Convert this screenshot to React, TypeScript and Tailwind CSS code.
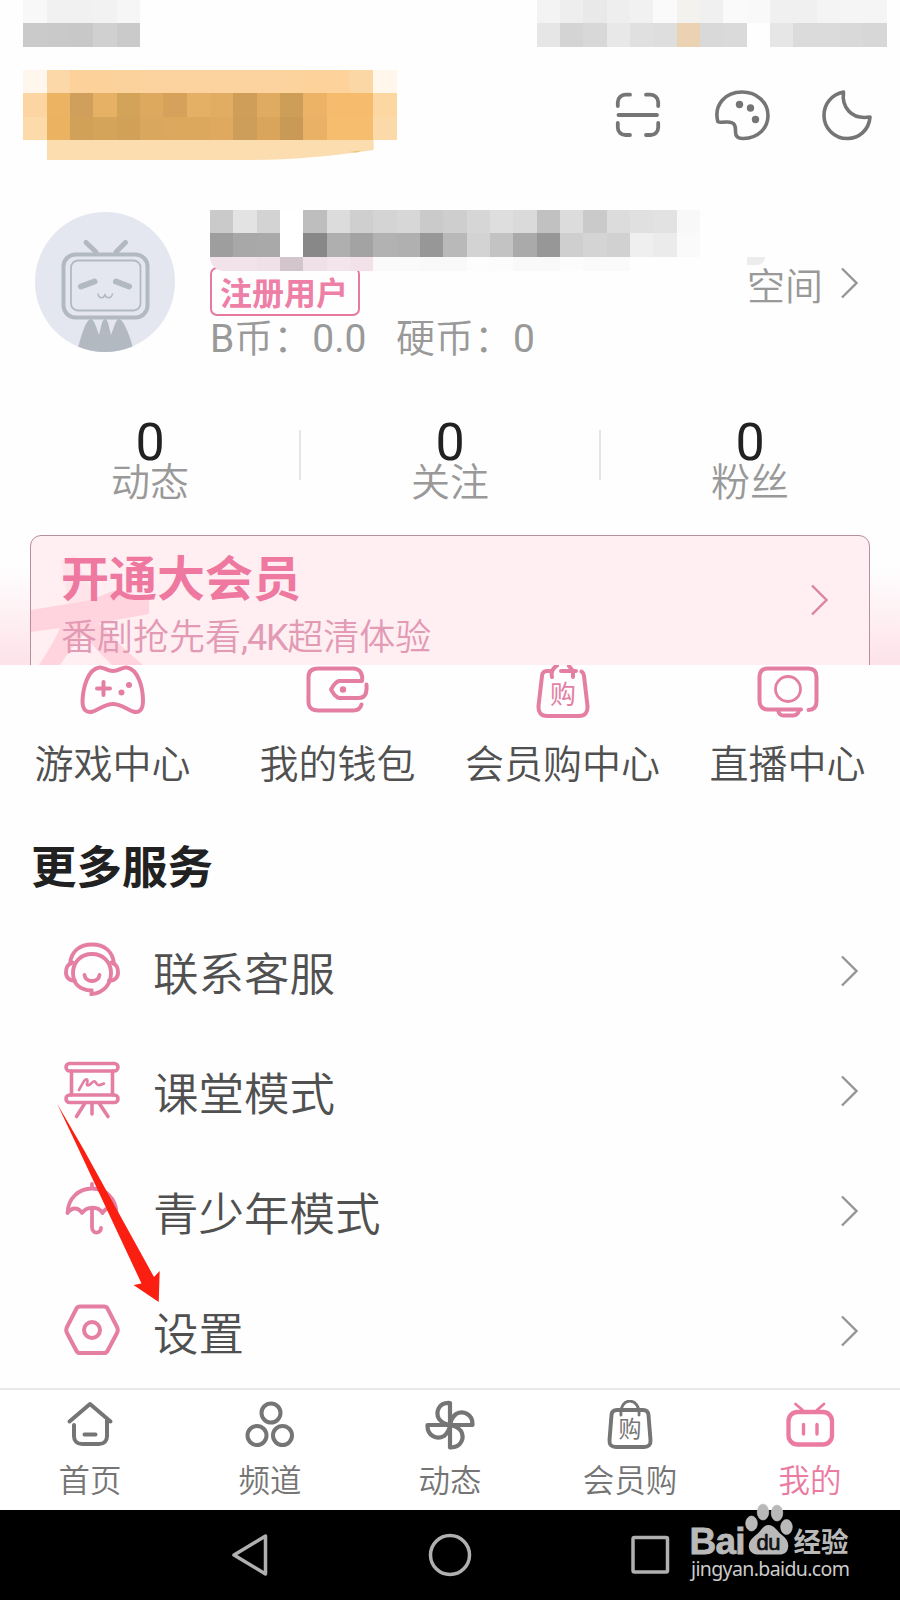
import type { ReactNode } from 'react';

const PINK = '#e47fa3';
const GRAY = '#757575';

const statusLeft = [
  ['bg-[#f8f8f8]', 'bg-[#f1f1f1]', 'bg-[#f1f1f1]', 'bg-[#f2f2f2]', 'bg-[#f6f6f6]'],
  ['bg-[#cacaca]', 'bg-[#c9c9c9]', 'bg-[#c8c8c8]', 'bg-[#d0d0d0]', 'bg-[#cacaca]'],
];

const statusRight = [
  ['bg-[#f3f3f3]', 'bg-[#eeeeee]', 'bg-[#e9e9e9]', 'bg-[#eeeeee]', 'bg-[#f1f1f1]', 'bg-[#fafafa]', 'bg-[#f4f2ee]', 'bg-[#f0f0f0]', 'bg-[#fafafa]', 'bg-[#f9f9f9]', 'bg-[#f0f0f0]', 'bg-[#f0f0f0]', 'bg-[#f4f4f4]', 'bg-[#f5f5f5]', 'bg-[#f5f5f5]'],
  ['bg-[#e6e6e6]', 'bg-[#d4d4d4]', 'bg-[#d8d8d8]', 'bg-[#e8e8e8]', 'bg-[#e0e0e0]', 'bg-[#dedede]', 'bg-[#ead2b3]', 'bg-[#d9d9d9]', 'bg-[#dadada]', 'bg-[#fefefe]', 'bg-[#e6e6e6]', 'bg-[#dbdbdb]', 'bg-[#dbdbdb]', 'bg-[#d9d9d9]', 'bg-[#d7d7d7]'],
];

const searchBar = [
  ['bg-[#fff7ee]', 'bg-[#fcd8a8]', 'bg-[#fdd29a]', 'bg-[#fdd29a]', 'bg-[#fcd29c]', 'bg-[#fcd39e]', 'bg-[#fcd39e]', 'bg-[#fcd39e]', 'bg-[#fcd39e]', 'bg-[#fcd39e]', 'bg-[#fcd39e]', 'bg-[#fcd39d]', 'bg-[#fdd39b]', 'bg-[#fdd39b]', 'bg-[#fbd7a6]', 'bg-[#fff7ec]'],
  ['bg-[#fcd5a2]', 'bg-[#ecb363]', 'bg-[#cf9f5b]', 'bg-[#e6b164]', 'bg-[#d3a35a]', 'bg-[#dda95f]', 'bg-[#d5a15b]', 'bg-[#e4b065]', 'bg-[#e0ad62]', 'bg-[#cf9f5a]', 'bg-[#dfab60]', 'bg-[#cd9e58]', 'bg-[#ecb367]', 'bg-[#f6bb6c]', 'bg-[#f6bb6c]', 'bg-[#fcd7a1]'],
  ['bg-[#fcdaa9]', 'bg-[#ebb262]', 'bg-[#d2a159]', 'bg-[#d5a45b]', 'bg-[#d2a159]', 'bg-[#daa75e]', 'bg-[#dba85e]', 'bg-[#dca85e]', 'bg-[#dfaa60]', 'bg-[#cd9e59]', 'bg-[#daa45b]', 'bg-[#c99a55]', 'bg-[#e9b166]', 'bg-[#f6bd6f]', 'bg-[#f6bd6e]', 'bg-[#fbd9a8]'],
];

const userName = [
  ['bg-[#cacaca]', 'bg-[#e3e3e3]', 'bg-[#d3d3d3]', 'bg-white', 'bg-[#bebebe]', 'bg-[#dcdcdc]', 'bg-[#cfcfcf]', 'bg-[#d4d4d4]', 'bg-[#d7d7d7]', 'bg-[#cacaca]', 'bg-[#cecece]', 'bg-[#d6d6d6]', 'bg-[#dedede]', 'bg-[#dadada]', 'bg-[#c1c1c1]', 'bg-[#dcdcdc]', 'bg-[#cacaca]', 'bg-[#dcdcdc]', 'bg-[#e0e0e0]', 'bg-[#e2e2e2]', 'bg-[#f8f8f8]'],
  ['bg-[#9e9e9e]', 'bg-[#a8a8a8]', 'bg-[#a9a9a9]', 'bg-white', 'bg-[#888888]', 'bg-[#afafaf]', 'bg-[#a3a3a3]', 'bg-[#b2b2b2]', 'bg-[#b0b0b0]', 'bg-[#979797]', 'bg-[#b9b9b9]', 'bg-[#d3d3d3]', 'bg-[#c3c3c3]', 'bg-[#aaaaaa]', 'bg-[#979797]', 'bg-[#cfcfcf]', 'bg-[#d4d4d4]', 'bg-[#d1d1d1]', 'bg-[#efefef]', 'bg-[#ebebeb]', 'bg-[#fafafa]'],
];

const nameShadow = [
  ['bg-[#f2e2e9] rounded-bl-full', 'bg-[#f2e2e9]', 'bg-[#f0e0e8]', 'bg-[#d2c5cc]', 'bg-[#f0e0e8]', 'bg-[#f4e4eb]', 'bg-[#f3e1e9]', 'bg-[#fafafa]', 'bg-[#fafafa]', 'bg-[#f9f9f9]', 'bg-[#f9f9f9]', 'bg-[#fdfdfd]', 'bg-[#fcfcfc]', 'bg-[#f9f9f9]', 'bg-[#f9f9f9]', 'bg-[#fcfcfc]', 'bg-[#fafafa]', 'bg-[#fafafa]'],
];

function Mosaic({ rows, rowClass = 'h-[23.33px]' }: { rows: string[][]; rowClass?: string }) {
  return (
    <div className="flex flex-col">
      {rows.map((row, i) => (
        <div key={i} className={`flex ${rowClass}`}>
          {row.map((cell, j) => (
            <div key={j} className={`w-[23.33px] ${cell}`} />
          ))}
        </div>
      ))}
    </div>
  );
}

function Chevron({ color = '#969696' }: { color?: string }) {
  return (
    <svg width="18" height="32" viewBox="0 0 18 32" fill="none" stroke={color} strokeWidth="2.4">
      <path d="M2 1.5 L16.500 16 L2 30.5" />
    </svg>
  );
}

function ScanIcon() {
  return (
    <svg width="46" height="46" viewBox="0 0 46 46" fill="none" stroke={GRAY} strokeWidth="3.800" strokeLinecap="round">
      <path d="M2.8 14V10a7.500 7.500 0 0 1 7.500-7.300H15M31 2.700h4.700A7.500 7.500 0 0 1 43.200 10v4M43.200 31v4.500a7.500 7.500 0 0 1-7.500 7.500H31M15 43h-4.700a7.500 7.500 0 0 1-7.500-7.500V31M3.500 23h38.500" />
    </svg>
  );
}

function PaletteIcon() {
  return (
    <svg width="56" height="52" viewBox="0 0 56 52" fill="none">
      <path
        d="M3.800 32.500C-.500 15 12 3 28 3c15 0 26 10.500 26 23.500C54 39 44.500 49 29.500 49.500c-6 .200-8-2.500-8-6.500.200-6-.500-10-8-10-5 .200-8.800.500-9.700-.500z"
        stroke={GRAY}
        strokeWidth="3.600"
      />
      <circle cx="25.500" cy="15.500" r="3.700" fill={GRAY} />
      <circle cx="36.500" cy="19" r="3.700" fill={GRAY} />
      <circle cx="41.500" cy="30.500" r="3.700" fill={GRAY} />
    </svg>
  );
}

function MoonIcon() {
  return (
    <svg width="52" height="52" viewBox="0 0 52 52" fill="none" stroke={GRAY} strokeWidth="3.600" strokeLinejoin="round">
      <path d="M22.500 3C20.500 18 30 31 49 28C48 41 38 49.500 26.500 49.500C13 49.500 3 39 3 26.500C3 15 10.500 5.500 22.500 3z" />
    </svg>
  );
}

function Avatar() {
  return (
    <svg width="140" height="140" viewBox="0 0 140 140">
      <defs>
        <clipPath id="avatar">
          <circle cx="70" cy="70" r="70" />
        </clipPath>
      </defs>
      <circle cx="70" cy="70" r="70" fill="#e5e7f0" />
      <g clipPath="url(#avatar)" fill="none" stroke="#b3b9c1" strokeLinecap="round">
        <path d="M40 150C45 125 51 107 56 107C59 107 62 117 64 123C66 115 67 107 70 107C73 107 74 115 76 123C79 115 81 107 84 107C89 107 98 130 101 150z" fill="#b3b9c1" stroke="none" />
        <path d="M51 30.500L61 40M90.500 30.500L81 40" strokeWidth="5" />
        <rect x="28.500" y="42.500" width="84" height="63" rx="12" strokeWidth="4" fill="#e5e7f0" />
        <rect x="36" y="48.500" width="69.500" height="50" rx="7" strokeWidth="1.800" />
        <path d="M46 74.500L59.500 69.500M81 69.500L94 74.500" strokeWidth="6" />
        <path d="M63 82C64 87 69 87 70 82C71 87 76 87 77.500 82" strokeWidth="1.500" />
      </g>
    </svg>
  );
}

function GamepadIcon() {
  return (
    <svg width="66" height="50" viewBox="0 0 66 50" fill="none" stroke={PINK} strokeWidth="4" strokeLinecap="round" strokeLinejoin="round">
      <path d="M19 2.500C23 1.500 27 6 33 6C39 6 43 1.500 47 2.500C58 4.500 63 22 63 36C63 45 59 48.500 53 46.500C46 43.500 40 39 33 39C26 39 20 43.500 13 46.500C6 48.500 2.500 44.500 2.500 36C3 22 8 4.500 19 2.500z" />
      <path d="M23.500 17v13M17 23.500h13" />
      <circle cx="49" cy="20" r="3" fill={PINK} stroke="none" />
      <circle cx="41.500" cy="27.500" r="3" fill={PINK} stroke="none" />
    </svg>
  );
}

function WalletIcon() {
  return (
    <svg width="66" height="50" viewBox="0 0 66 50" fill="none" stroke={PINK} strokeWidth="4" strokeLinecap="round" strokeLinejoin="round">
      <path d="M56.500 39.500C55.500 43.500 52.500 45.500 48 45.500H13C7 45.500 3.500 42.500 3.500 37V12C3.500 6 7 3.500 13 3.500H48C55 3.500 58 9 57 16H34C30 17 28 21 26 24.500C28 28 30 32 34 33H54C60 33 62 29 61.500 19.500" />
      <circle cx="38" cy="24.500" r="3.200" fill={PINK} stroke="none" />
    </svg>
  );
}

function MallIcon() {
  return (
    <svg width="56" height="54" viewBox="0 0 56 54" fill="none" stroke={PINK} strokeWidth="4" strokeLinecap="round" strokeLinejoin="round">
      <path d="M16.500 6H12Q7.500 6 7 11L3.500 41Q3 51 12 51H44Q53 51 52.500 41L49 11Q48.500 7.500 46.500 6.500M26 6H41M17 12C15.500 6 18 3 22 .500M38 12V6L34 1" />
      <text x="28" y="39" textAnchor="middle" fontSize="26" fontWeight="400" fill={PINK} stroke="none">购</text>
    </svg>
  );
}

function LiveIcon() {
  return (
    <svg width="64" height="54" viewBox="0 0 64 54" fill="none" stroke={PINK} strokeWidth="4" strokeLinecap="round">
      <path d="M52.500 45C58 45 60.500 42 60.500 36.500V12C60.500 6.500 58 3.500 52.500 3.500H12C6.500 3.500 3.500 6.500 3.500 12V35.500C3.500 41 6.500 44.500 12 44.500H45" />
      <path d="M22 45C23 49 24 50.500 27.500 50.500H37C40.500 50.500 42 49 43 45.500" />
      <circle cx="32" cy="24" r="12.500" strokeWidth="2.800" />
    </svg>
  );
}

function SupportIcon() {
  return (
    <svg className="-mt-[5px]" width="58" height="56" viewBox="0 0 58 56" fill="none" stroke={PINK} strokeWidth="3.900" strokeLinecap="round">
      <path d="M7 23C8 10 17 3.500 29 3.500C41 3.500 50 10 51 23" />
      <path d="M9.500 21.500C3.500 24 3 27.500 3 32C3 36.500 7 40.500 12 39.500M48.500 21.500C54.500 24 55 27.500 55 32C55 36.500 51 40.500 46 39.500" />
      <path d="M28.500 53V49.500C16 49 10 42 10 32C10 21 18 13 29 13C40 13 48 21 48 32C48 43 41 52 28.500 53z" />
      <path d="M21.500 34C22.500 42 35.500 42 36.500 34" />
    </svg>
  );
}

function ClassroomIcon() {
  return (
    <svg className="-mt-[2px]" width="56" height="58" viewBox="0 0 56 58" fill="none" stroke={PINK} strokeWidth="3.600" strokeLinecap="round" strokeLinejoin="round">
      <rect x="2" y="2.500" width="52" height="7.500" rx="3.700" />
      <rect x="2" y="34" width="52" height="7.500" rx="3.700" />
      <path d="M7.500 10v24M48.500 10v24M21 42L12.500 55.500M28 42V53M35 42L44 55.500" />
      <path d="M15 29C19 22 21 17 23 18.500C25 20 21 24.500 24 24.500C27 24 29 19 31 20.500C33 23 33 26 40 22.500" strokeWidth="2.600" />
    </svg>
  );
}

function UmbrellaIcon() {
  return (
    <svg className="-mt-[4px]" width="56" height="54" viewBox="0 0 56 54" fill="none" stroke={PINK} strokeWidth="3.800" strokeLinecap="round" strokeLinejoin="round">
      <path d="M28 2V6M3.500 31C4 16 15 6.500 28 6.500C41 6.500 52 16 52.500 31C48 25 42 25 38.500 31C34.500 24 23 24 18 31C14 25 8 25 3.500 31z" />
      <path d="M28 26V45C28 52.500 37 52 37 46" />
    </svg>
  );
}

function SettingsIcon() {
  return (
    <svg className="-mt-[2px]" width="56" height="52" viewBox="0 0 56 52" fill="none" stroke={PINK} strokeLinejoin="round">
      <path d="M16 2.500H40Q42.500 2.500 43.500 4.500L53 23Q54.500 26 53 29L43.500 47Q42.500 49 40 49H16Q13.500 49 12.500 47L3 29Q1.500 26 3 23L12.500 4.500Q13.500 2.500 16 2.500z" strokeWidth="4" />
      <circle cx="28" cy="26" r="8" strokeWidth="4" />
    </svg>
  );
}

function HomeIcon() {
  return (
    <svg width="48" height="48" viewBox="0 0 48 48" fill="none" stroke={GRAY} strokeWidth="4" strokeLinecap="round" strokeLinejoin="round">
      <path d="M3.500 21.500L24 4L44.500 21.500M41 20V36C41 41 38 44 33 44H16C11 44 8 41 8 36V25M18.500 34.500H29.500" />
    </svg>
  );
}

function ChannelIcon() {
  return (
    <svg width="50" height="48" viewBox="0 0 50 48" fill="none" stroke={GRAY} strokeWidth="4">
      <circle cx="26" cy="13" r="9.500" />
      <circle cx="12" cy="35.500" r="9.500" />
      <circle cx="37.500" cy="35.500" r="9.500" />
    </svg>
  );
}

function FanIcon() {
  return (
    <svg width="50" height="50" viewBox="0 0 50 50" fill="none" stroke={GRAY} strokeWidth="4.200" strokeLinejoin="round">
      <path d="M25 25V3C14 2 10 12 14 19Q18 24 25 25z" />
      <path d="M25 25H47.500C48 14 38 10 31 14Q26 18 25 25z" />
      <path d="M25 25V47.500C36 48 40 38 36 31Q32 26 25 25z" />
      <path d="M25 25H2.500C2 36 12 40 19 36Q24 32 25 25z" />
    </svg>
  );
}

function ShopIcon() {
  return (
    <svg width="48" height="50" viewBox="0 0 48 50" fill="none" stroke={GRAY} strokeWidth="3.900" strokeLinecap="round">
      <path d="M11 10H37Q42 10 42.500 15L44.500 40Q45 47 38 47H10Q3 47 3.500 40L5.500 15Q6 10 11 10z" />
      <path d="M15 15C13 -3.500 34.500 -3.500 33 15" strokeWidth="2.800" />
      <text x="24" y="37" textAnchor="middle" fontSize="23" fontWeight="400" fill={GRAY} stroke="none">购</text>
    </svg>
  );
}

function MineIcon() {
  return (
    <svg width="50" height="48" viewBox="0 0 50 48" fill="none" stroke="#ec7ba2" strokeLinecap="round">
      <rect x="3.500" y="12" width="43.500" height="32.500" rx="9" strokeWidth="4.300" />
      <path d="M10.500 4L17.500 10M39 4L32 10" strokeWidth="2.800" />
      <path d="M18.500 24.500V34M32 24.500V34" strokeWidth="3.400" />
    </svg>
  );
}

const stats = [
  { value: 0, label: '动态' },
  { value: 0, label: '关注' },
  { value: 0, label: '粉丝' },
];

const shortcuts: { icon: ReactNode; label: string }[] = [
  { icon: <GamepadIcon />, label: '游戏中心' },
  { icon: <WalletIcon />, label: '我的钱包' },
  { icon: <MallIcon />, label: '会员购中心' },
  { icon: <LiveIcon />, label: '直播中心' },
];

const services: { icon: ReactNode; label: string }[] = [
  { icon: <SupportIcon />, label: '联系客服' },
  { icon: <ClassroomIcon />, label: '课堂模式' },
  { icon: <UmbrellaIcon />, label: '青少年模式' },
  { icon: <SettingsIcon />, label: '设置' },
];

const tabs: { icon: ReactNode; label: string; active?: boolean }[] = [
  { icon: <HomeIcon />, label: '首页' },
  { icon: <ChannelIcon />, label: '频道' },
  { icon: <FanIcon />, label: '动态' },
  { icon: <ShopIcon />, label: '会员购' },
  { icon: <MineIcon />, label: '我的', active: true },
];

function Watermark() {
  return (
    <svg className="absolute left-[686px] -top-[8px]" width="170" height="90" viewBox="0 0 170 90" fill="#b9b9b9">
      <text x="3.500" y="52" fontFamily="Liberation Sans" fontWeight="700" fontSize="37" textLength="56" stroke="#b9b9b9" strokeWidth=".8">Bai</text>
      <g stroke="#c9c9c9" strokeWidth=".6">
        <ellipse cx="65.500" cy="21.500" rx="5.800" ry="7.500" />
        <ellipse cx="77" cy="10" rx="5.800" ry="8" />
        <ellipse cx="91" cy="11" rx="5.800" ry="8" />
        <ellipse cx="100.500" cy="25" rx="5.800" ry="7.500" />
      </g>
      <path d="M82.500 23C88 23 91 29 96 33C101 37 103 41 102 46C101 52 96 53 91 52.500H74C69 53 64 51 63 46C62 40 66 36 70 33C75 29 77 23 82.500 23z" />
      <text x="70.500" y="47.500" fontFamily="Liberation Sans" fontSize="22" fontWeight="400" fill="#111" stroke="#111" strokeWidth=".7" textLength="24">du</text>
      <text x="107.500" y="49.500" fontSize="27.500" fontWeight="700" textLength="55">经验</text>
      <text x="5" y="73.500" fontFamily="Noto Sans" fontWeight="400" fontSize="19.500" fill="#cccccc" textLength="159">jingyan.baidu.com</text>
    </svg>
  );
}

export default function App() {
  return (
    <div className="relative flex h-[1600px] w-[900px] flex-col overflow-hidden bg-[#fefefe] font-['Noto_Sans_CJK_SC',sans-serif] font-[350]">
      {/* Status bar */}
      <div className="flex h-[70px] justify-between pr-[13.5px] pl-[23.33px]">
        <Mosaic rows={statusLeft} />
        <Mosaic rows={statusRight} />
      </div>

      {/* Top bar */}
      <div className="flex h-[140px] items-start justify-between pr-[27px] pl-[23.33px]">
        <div>
          <Mosaic rows={searchBar} />
          <svg className="ml-[23.33px] block" width="328" height="22" viewBox="0 0 328 22">
            <path d="M0 0H326.700V10C280 17 240 20 200 20H0z" fill="#fbddb0" />
            <path d="M302 12L314 10.500L310 12.500z" fill="#e5c477" />
          </svg>
        </div>
        <div className="flex items-center pt-[19px]">
          <ScanIcon />
          <div className="mr-[51px] ml-[53px]">
            <PaletteIcon />
          </div>
          <MoonIcon />
        </div>
      </div>

      {/* Profile */}
      <div className="flex h-[210px] pl-[35px]">
        <div className="w-[175px] pt-[2px]">
          <Avatar />
        </div>
        <div className="flex w-[490px] flex-col">
          <Mosaic rows={userName} />
          <div className="relative h-[60.500px]">
            <div className="absolute top-[10px] flex h-[49px] w-[150px] items-center justify-center rounded-[7px] border-[2.500px] border-[#e6799f] pr-[2px] text-[32px] leading-none font-bold text-[#ee7fa6]">
              注册用户
            </div>
            <div className="absolute top-0">
              <Mosaic rows={nameShadow} rowClass="h-[14px]" />
            </div>
          </div>
          <div className="flex h-[44px] items-center font-[Roboto,'Noto_Sans_CJK_SC',sans-serif] text-[39px] leading-none whitespace-nowrap text-[#999]">
            <div className="w-[186px]">
              <span className="font-normal">B</span>币：<span className="font-normal">0.0</span>
            </div>
            <div>
              硬币：<span className="font-normal">0</span>
            </div>
          </div>
        </div>
        <div className="relative flex h-[145px] flex-1 items-center pl-[47px] text-[38px] text-[#999]">
          <div className="absolute top-[47px] left-[47px] h-[8px] w-[18px] rounded-br-full bg-[#ececec]" />
          <span className="w-[93px] pt-[3px] leading-none">空间</span>
          <Chevron />
        </div>
      </div>

      {/* Stats */}
      <div className="grid h-[115px] grid-cols-3">
        {stats.map((item, i) => (
          <div key={item.label} className="flex">
            <div className="flex flex-1 flex-col items-center">
              <div className="h-[37px] font-[Roboto] text-[52px] leading-[45px] font-normal text-[#212121]">{item.value}</div>
              <div className="text-[39px] leading-[44px] text-[#999]">{item.label}</div>
            </div>
            {i < 2 && <div className="-mr-[1px] -ml-[1px] mt-[10px] h-[50px] w-[2px] bg-[#e5e5e5]" />}
          </div>
        ))}
      </div>

      {/* VIP card */}
      <div className="h-[130px] overflow-hidden bg-linear-to-b from-[#fefefe] from-25% to-[#fde2e9] px-[30px]">
        <div className="relative flex h-[150px] items-start justify-between overflow-hidden rounded-[11px] border border-[#b58e9f] bg-[#ffeff2]">
          <svg className="absolute top-0 left-0" width="130" height="130" viewBox="0 0 130 130" fill="#ffd4df">
            <path d="M30 24L44 20L64 62L56 70H38z" fill="#ffe5eb" />
            <path d="M0 74L60 64L84 54L118 62V78L68 87Q85 106 112 129H81Q61 110 53 98Q40 112 29 129H8Q22 108 29 92L0 96z" />
          </svg>
          <div className="relative pl-[30px] whitespace-nowrap">
            <div className="pt-[15px] text-[48px] leading-[48px] font-bold text-[#ee789f]">开通大会员</div>
            <div className="mt-[19px] font-[Roboto,'Noto_Sans_CJK_SC',sans-serif] text-[36px] leading-[40px] text-[#e39ab4]">
              番剧抢先看<span className="font-normal tracking-[-1.200px]">,4K</span>超清体验
            </div>
          </div>
          <div className="mt-[48px] mr-[41px]">
            <Chevron color="#db84a2" />
          </div>
        </div>
      </div>

      {/* Shortcuts */}
      <div className="grid h-[160px] grid-cols-4">
        {shortcuts.map((item) => (
          <div key={item.label} className="flex flex-col items-center">
            <div className="h-[74px]">{item.icon}</div>
            <div className="text-[39px] leading-[44px] text-[#505050]">{item.label}</div>
          </div>
        ))}
      </div>

      {/* More services */}
      <h2 className="h-[86px] pt-[16px] pl-[31px] text-[45.500px] leading-[46px] font-bold text-[#212121]">更多服务</h2>
      <div className="h-[477px]">
        {services.map((item) => (
          <div key={item.label} className="flex h-[120px] items-center pr-[42px] pl-[62px]">
            <div className="flex w-[60px] justify-center">{item.icon}</div>
            <span className="ml-[31px] flex-1 pt-[1px] text-[45.500px] leading-none text-[#505050]">{item.label}</span>
            <Chevron />
          </div>
        ))}
      </div>

      {/* Tab bar */}
      <div className="grid h-[122px] grid-cols-5 border-t-2 border-[#e7e7e7] bg-white">
        {tabs.map((tab) => (
          <div key={tab.label} className={`flex flex-col items-center pt-[10px] ${tab.active ? 'text-[#ec7ba2]' : 'text-[#757575]'}`}>
            <div className="h-[58px]">{tab.icon}</div>
            <div className="text-[31.500px] leading-[40px]">{tab.label}</div>
          </div>
        ))}
      </div>

      {/* System navigation */}
      <div className="relative flex h-[90px] shrink-0 bg-black pl-[230px]">
        <svg className="mt-[22px]" width="442" height="46" viewBox="0 0 442 46" fill="none" stroke="#b0b0b0" strokeWidth="3.500" strokeLinejoin="round">
          <path d="M35.500 4V42L4 23z" />
          <circle cx="220" cy="23" r="19.500" />
          <rect x="403" y="5.500" width="34.500" height="34.500" rx="1.500" />
        </svg>
        <Watermark />
      </div>

      {/* Pointer to settings */}
      <svg className="absolute top-[1100px] left-[50px]" width="120" height="210" viewBox="0 0 120 210">
        <path d="M7 3.500L34 50L104 177L109.700 171L108.700 202L83.500 185L91.500 183.500L29 50z" fill="#fb1f12" />
      </svg>
    </div>
  );
}
